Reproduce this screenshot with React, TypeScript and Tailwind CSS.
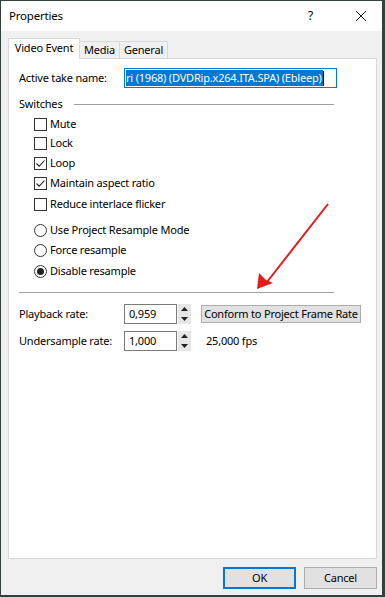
import React from 'react'

const font = { fontFamily: '"Noto Sans", "Open Sans", sans-serif' }

const CheckBox = ({ checked, label, h }: { checked?: boolean; label: string; h: string }) => (
  <div className={`flex items-center pl-[15px] ${h}`}>
    <div className="w-[13px] h-[13px] border border-[#333] bg-white flex items-center justify-center">
      {checked && (
        <svg width="11" height="11" viewBox="0 0 11 11">
          <path d="M1.5 5.5 L4.2 8.2 L9.5 2.5" fill="none" stroke="#222" strokeWidth="1.1" />
        </svg>
      )}
    </div>
    <span className="ml-[3px]">{label}</span>
  </div>
)

const Radio = ({ checked, label, h }: { checked?: boolean; label: string; h: string }) => (
  <div className={`flex items-center pl-[15px] ${h}`}>
    <div className="w-[13px] h-[13px] rounded-full border border-[#333] bg-white flex items-center justify-center">
      {checked && <div className="w-[7px] h-[7px] rounded-full bg-[#222]" />}
    </div>
    <span className="ml-[3px]">{label}</span>
  </div>
)

const Spinner = () => (
  <div className="w-[13px] h-[20px] bg-[#e6e6e6] flex flex-col items-center justify-between py-[3px]">
    <svg width="7" height="4" viewBox="0 0 7 4">
      <path d="M0 4 L3.5 0 L7 4 Z" fill="#222" />
    </svg>
    <svg width="7" height="4" viewBox="0 0 7 4">
      <path d="M0 0 L3.5 4 L7 0 Z" fill="#222" />
    </svg>
  </div>
)

const NumField = ({ value }: { value: string }) => (
  <div className="flex items-center shrink-0">
    <div className="w-[53px] h-[20px] border border-[#7a7a7a] bg-white flex items-center pl-[4px]">{value}</div>
    <div className="ml-px">
      <Spinner />
    </div>
  </div>
)

export default function App() {
  return (
    <div
      className="w-[385px] h-[597px] bg-[#33403f] pl-px pt-px pr-[3px] pb-[2px] flex text-[11px] tracking-[-0.2px] text-black whitespace-nowrap"
      style={font}
    >
      <div className="relative flex-1 flex flex-col bg-[#f0f0f0]">
        {/* title bar */}
        <div className="h-[30px] bg-white flex items-center pl-[8px] text-[11.5px]">
          <span>Properties</span>
          <span className="ml-auto mr-[42px] text-[12px]">?</span>
          <svg width="12" height="12" viewBox="0 0 12 12" className="mr-[15px]">
            <path d="M1 1 L11 11 M11 1 L1 11" stroke="#111" strokeWidth="1" />
          </svg>
        </div>

        <div className="flex-1 flex flex-col pl-[7px] pr-[5px] pt-[7px] pb-[6px]">
          {/* tabs */}
          <div className="flex items-end h-[21px] -mb-px relative z-10">
            <div className="w-[72px] h-[21px] bg-white border-x border-t border-[#d9d9d9] flex items-center justify-center pb-[2px]">
              Video Event
            </div>
            <div className="w-[40px] h-[18px] border-t border-r border-b border-[#d9d9d9] flex items-center justify-center">
              Media
            </div>
            <div className="w-[48px] h-[18px] border-t border-r border-b border-[#d9d9d9] flex items-center justify-center">
              General
            </div>
          </div>

          {/* panel */}
          <div className="h-[501px] bg-white border border-[#d9d9d9] pl-[10px] flex flex-col">
            <div className="flex items-center mt-[9px] h-[20px]">
              <span className="w-[105px] shrink-0">Active take name:</span>
              <div className="w-[213px] shrink-0 h-[20px] border border-[#0078d7] bg-white flex items-center pl-px overflow-hidden">
                <span className="bg-[#0078d7] text-white leading-[16px] pr-px">
                  ri (1968) (DVDRip.x264.ITA.SPA) (Ebleep)
                </span>
                <span className="w-px h-[15px] bg-black shrink-0" />
              </div>
            </div>

            <div className="flex items-center mt-[8px] h-[16px]">
              <span>Switches</span>
              <div className="w-[260px] h-px bg-[#a0a0a0] ml-[12px]" />
            </div>

            <div className="mt-[2px] flex flex-col">
              <CheckBox label="Mute" h="h-[20px]" />
              <CheckBox label="Lock" h="h-[19px]" />
              <CheckBox checked label="Loop" h="h-[20px]" />
              <CheckBox checked label="Maintain aspect ratio" h="h-[21px]" />
              <CheckBox label="Reduce interlace flicker" h="h-[21px]" />
            </div>
            <div className="mt-[5px] flex flex-col">
              <Radio label="Use Project Resample Mode" h="h-[21px]" />
              <Radio label="Force resample" h="h-[19px]" />
              <Radio checked label="Disable resample" h="h-[22px]" />
            </div>

            <div className="mt-[10px] w-[315px] h-px bg-[#a0a0a0]" />

            <div className="flex items-center mt-[11px] h-[20px]">
              <span className="w-[105px] shrink-0">Playback rate:</span>
              <NumField value="0,959" />
              <div className="ml-[10px] w-[160px] shrink-0 h-[18px] bg-[#e1e1e1] border border-[#adadad] flex items-center justify-center">
                Conform to Project Frame Rate
              </div>
            </div>
            <div className="flex items-center mt-[7px] h-[20px]">
              <span className="w-[105px] shrink-0">Undersample rate:</span>
              <NumField value="1,000" />
              <span className="ml-[15px]">25,000 fps</span>
            </div>
          </div>

          {/* buttons */}
          <div className="flex justify-end mt-[8px] gap-[8px]">
            <div className="w-[73px] h-[22px] bg-[#e1e1e1] border-2 border-[#0078d7] flex items-center justify-center">
              OK
            </div>
            <div className="w-[73px] h-[22px] bg-[#e1e1e1] border border-[#adadad] flex items-center justify-center">
              Cancel
            </div>
          </div>
        </div>

        {/* red annotation arrow */}
        <svg className="absolute left-0 top-0 pointer-events-none" width="385" height="597" viewBox="0 0 385 597">
          <line x1="327" y1="203" x2="266" y2="281" stroke="#e31b1b" strokeWidth="2" />
          <path d="M257 289 L259 273 L266 280 L273 283 Z" fill="#e31b1b" transform="translate(-1 -1)" />
        </svg>
      </div>
    </div>
  )
}
